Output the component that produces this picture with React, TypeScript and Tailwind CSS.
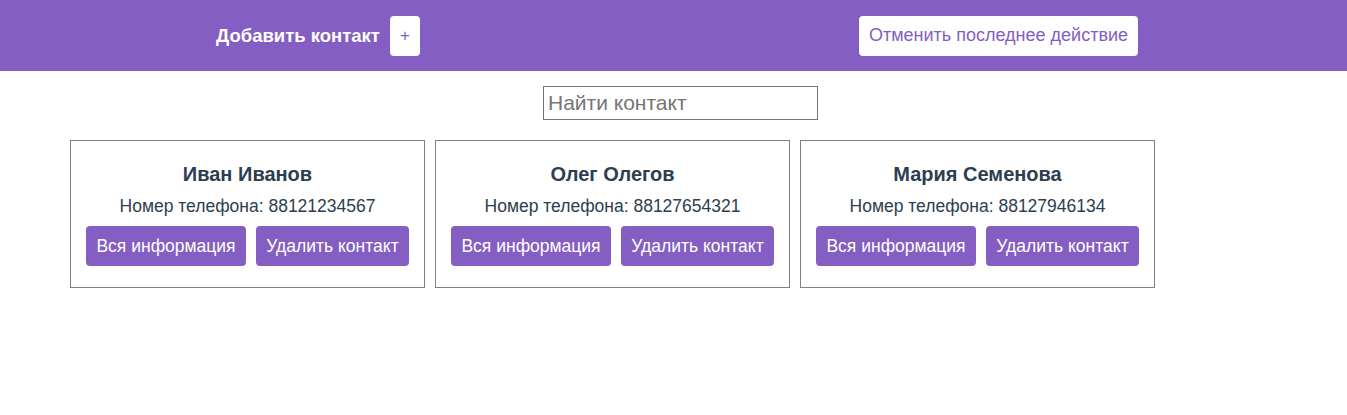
import React from "react";

const contacts = [
  { name: "Иван Иванов", phone: "88121234567" },
  { name: "Олег Олегов", phone: "88127654321" },
  { name: "Мария Семенова", phone: "88127946134" },
];

export default function App() {
  return (
    <div className="min-h-[415px] bg-white text-[#2c3e50]" style={{ fontFamily: '"Liberation Sans", Arial, sans-serif' }}>
      <header className="flex h-[71px] items-center bg-[#845ec2] pl-[216px]">
        <div className="flex w-[204px] items-center justify-between">
          <span className="text-[18.5px] font-bold text-white">Добавить контакт</span>
          <button className="flex h-[40px] w-[30px] items-center justify-center rounded-[4px] bg-white text-[17px] text-[#845ec2]">+</button>
        </div>
        <button className="ml-[439px] h-[40px] w-[279px] rounded-[4px] bg-white text-[18px] text-[#845ec2]">
          Отменить последнее действие
        </button>
      </header>
      <div className="flex justify-center pl-[14px] pt-[15px]">
        <input
          className="h-[34px] w-[275px] border border-[#767676] px-[4px] text-[21px] text-[#2c3e50] placeholder:text-[#757575] outline-none"
          placeholder="Найти контакт"
        />
      </div>
      <div className="flex gap-[10px] pl-[70px] pt-[20px]">
        {contacts.map((c) => (
          <div key={c.phone} className="flex h-[148px] w-[355px] flex-col items-center border border-[#808080] pt-[21px]">
            <div className="text-[20px] font-bold leading-[25px]">{c.name}</div>
            <div className="mt-[9px] text-[17.5px] leading-[21px]">Номер телефона: {c.phone}</div>
            <div className="mt-[9px] flex gap-[10px]">
              <button className="h-[40px] w-[160px] rounded-[4px] bg-[#845ec2] text-[17.5px] text-white">Вся информация</button>
              <button className="h-[40px] w-[153px] rounded-[4px] bg-[#845ec2] text-[17.5px] text-white">Удалить контакт</button>
            </div>
          </div>
        ))}
      </div>
    </div>
  );
}
